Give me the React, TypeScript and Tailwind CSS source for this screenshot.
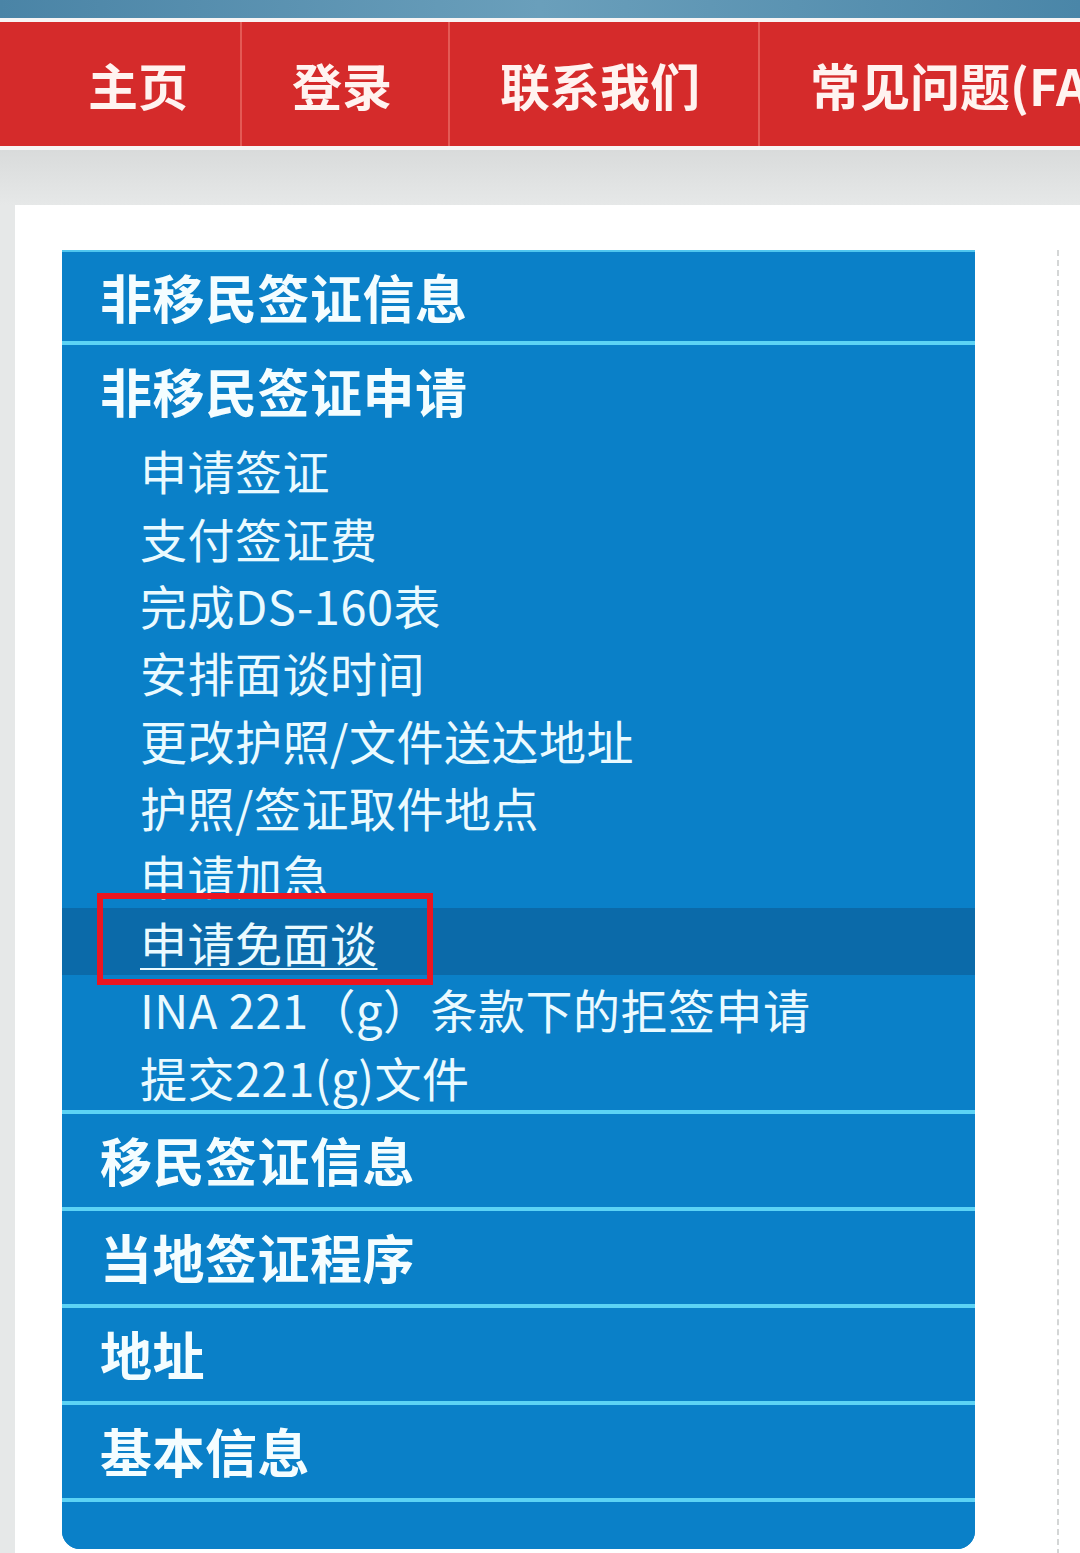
import React from "react";

const font = { fontFamily: '"Noto Sans CJK SC", "Noto Sans", sans-serif' };

const subItems = [
  "申请签证",
  "支付签证费",
  "完成DS-160表",
  "安排面谈时间",
  "更改护照/文件送达地址",
  "护照/签证取件地点",
  "申请加急",
  "申请免面谈",
  "INA 221（g）条款下的拒签申请",
  "提交221(g)文件",
];

function Divider() {
  return <div className="h-[4px] bg-[#5cd3f5]" />;
}

function Header({ label, h }: { label: string; h: string }) {
  return (
    <div className={`${h} flex items-center pl-[38px] bg-[#0a80c8]`}>
      <span className="text-[52px] font-bold text-[#f4fdff] leading-none tracking-[0.5px]">{label}</span>
    </div>
  );
}

export default function App() {
  return (
    <div className="w-[1080px] h-[1553px] overflow-hidden bg-[#e6e8e8]" style={font}>
      {/* top strip */}
      <div className="h-[18px] bg-gradient-to-r from-[#4a84a6] via-[#6a9fbb] to-[#4a86a8]" />
      <div className="h-[4px] bg-[#f7f4f4]" />
      {/* nav */}
      <div className="h-[124px] bg-[#d52b2b] flex items-center text-[#fff3f0] text-[50px] font-bold whitespace-nowrap overflow-hidden">
        <div className="w-[242px] shrink-0 h-full flex items-center pl-[88px] border-r-2 border-[#e45a55]">主页</div>
        <div className="w-[208px] shrink-0 h-full flex items-center pl-[50px] border-r-2 border-[#e45a55]">登录</div>
        <div className="w-[310px] shrink-0 h-full flex items-center pl-[50px] border-r-2 border-[#e45a55]">联系我们</div>
        <div className="shrink-0 h-full flex items-center pl-[50px]">常见问题(FAQ)</div>
      </div>
      <div className="h-[4px] bg-[#f7f5f5]" />
      {/* grey band */}
      <div className="h-[55px] bg-gradient-to-b from-[#d9dbdb] to-[#e6e8e8]" />
      {/* white panel */}
      <div className="ml-[15px] bg-white h-[1400px] flex pt-[45px]">
        <div className="ml-[47px] w-[913px] shrink-0 flex flex-col">
          <div className="rounded-b-[18px] overflow-hidden bg-[#0a80c8] border-t-2 border-[#4fc6ef]">
            <Header label="非移民签证信息" h="h-[89px]" />
            <Divider />
            <div className="bg-[#0a80c8]">
              <div className="h-[91px] flex items-center pl-[38px]">
                <span className="text-[52px] font-bold text-[#f4fdff] leading-none tracking-[0.5px]">非移民签证申请</span>
              </div>
              {subItems.map((t, i) => (
                <div
                  key={t}
                  className={`relative h-[67.4px] flex items-center pl-[78px] ${i === 7 ? "bg-[#0b6aa9]" : ""}`}
                >
                  <span
                    className={`text-[47px] text-[#eafaff] leading-none tracking-[0.5px] whitespace-nowrap ${
                      i === 7 ? "underline decoration-2 underline-offset-[6px]" : ""
                    }`}
                  >
                    {t}
                  </span>
                  {i === 7 && (
                    <div className="absolute left-[35px] top-[-15px] w-[336px] h-[92px] border-[6px] border-[#ec1520]" />
                  )}
                </div>
              ))}
            </div>
            <Divider />
            <Header label="移民签证信息" h="h-[93px]" />
            <Divider />
            <Header label="当地签证程序" h="h-[93px]" />
            <Divider />
            <Header label="地址" h="h-[93px]" />
            <Divider />
            <Header label="基本信息" h="h-[93px]" />
            <Divider />
            <div className="h-[47px] bg-[#0a80c8]" />
          </div>
        </div>
        <div className="ml-[82px] w-0 h-full border-l-2 border-dashed border-[#d4d6d6]" />
      </div>
    </div>
  );
}
